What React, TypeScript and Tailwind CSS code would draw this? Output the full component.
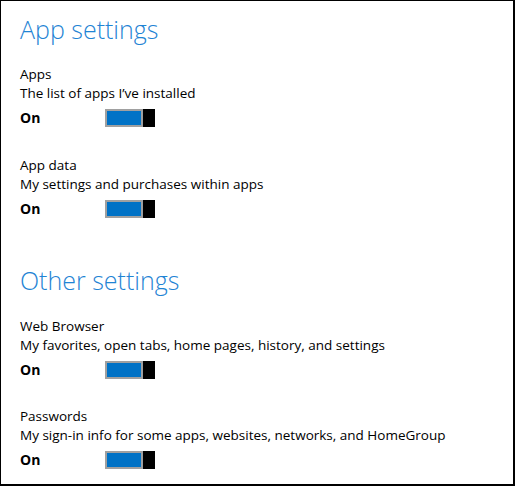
import React from 'react';

interface SyncItem {
  title: string;
  description: string;
}

const sections: { heading: string; gap: string; items: SyncItem[] }[] = [
  {
    heading: 'App settings',
    gap: 'mt-[29px]',
    items: [
      { title: 'Apps', description: 'The list of apps I\u2019ve installed' },
      { title: 'App data', description: 'My settings and purchases within apps' },
    ],
  },
  {
    heading: 'Other settings',
    gap: 'mt-[28px]',
    items: [
      { title: 'Web Browser', description: 'My favorites, open tabs, home pages, history, and settings' },
      { title: 'Passwords', description: 'My sign-in info for some apps, websites, networks, and HomeGroup' },
    ],
  },
];

const Toggle: React.FC = () => (
  <div className="flex h-[18px] w-[50px]">
    <div className="flex-1 border-2 border-[#a0a0a0] bg-[#0072c6]" />
    <div className="w-[12px] bg-black" />
  </div>
);

export default function App() {
  return (
    <div
      className="w-[515px] h-[486px] bg-white border-l border-t border-r-2 border-b-2 border-black pl-[19px] text-black"
      style={{ fontFamily: '"Open Sans", "Noto Sans", sans-serif' }}
    >
      {sections.map((section, si) => (
        <div key={section.heading} className={si === 0 ? 'pt-[12px]' : 'pt-[46px]'}>
          <h2 className="text-[25px] leading-[32px] font-light text-[#1f84d4]">{section.heading}</h2>
          {section.items.map((item, ii) => (
            <div key={item.title} className={ii === 0 ? (si === 0 ? 'mt-[20px]' : 'mt-[21px]') : section.gap}>
              <div className="text-[13.5px] leading-[19px]">{item.title}</div>
              <div className="text-[13.5px] leading-[19px]">{item.description}</div>
              <div className="flex items-center h-[18px] mt-[6px]">
                <span className="w-[85px] text-[14px] leading-none font-bold">On</span>
                <Toggle />
              </div>
            </div>
          ))}
        </div>
      ))}
    </div>
  );
}
